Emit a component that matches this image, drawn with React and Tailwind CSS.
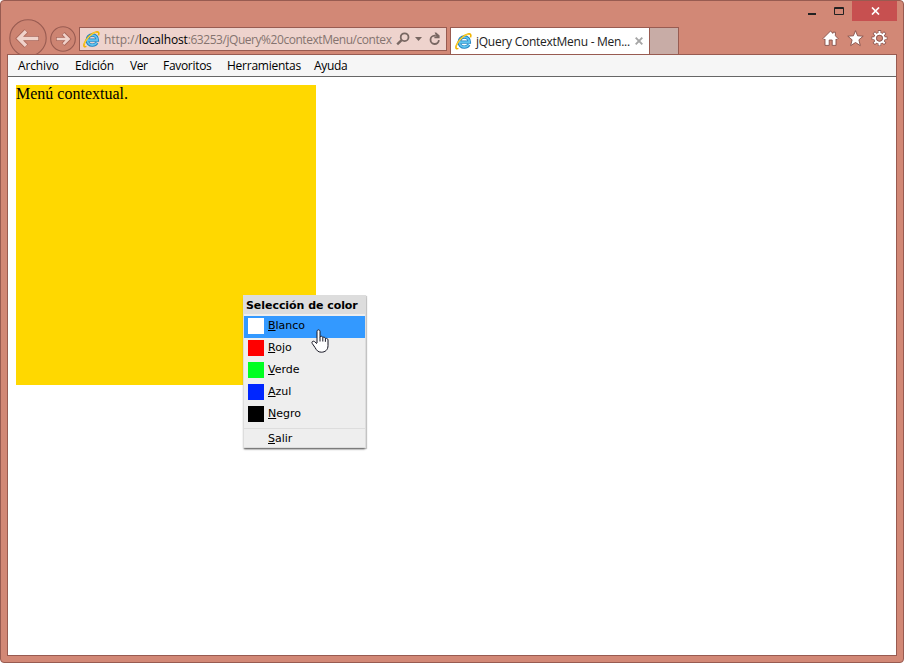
import React from "react";

function IELogo() {
  return (
    <svg width="17" height="17" viewBox="0 0 17 17" fill="none" className="shrink-0">
      <path d="M5 9.2H14.4C14.4 6.2 12.4 4 9.4 4C6.4 4 4.2 6.3 4.2 9.1C4.2 12 6.4 14.2 9.4 14.2C11.5 14.2 13 13.2 13.9 11.7" stroke="#1b7dbd" strokeWidth="3.3" />
      <path d="M5 9.2H14.3C14.3 6.3 12.4 4.1 9.4 4.1C6.4 4.1 4.3 6.3 4.3 9.1C4.3 12 6.4 14 9.4 14C11.4 14 12.9 13.1 13.7 11.8" stroke="#5fc3ef" strokeWidth="1.9" />
      <path d="M3.4 15.4C1.4 16.4.4 15.2 1.2 12.8C2.8 8 8.5 2.1 13 1C15.8.4 16.4 2 15.4 4.4" stroke="#f0b400" strokeWidth="1.6" />
      <path d="M1.5 12.6C3.3 7.9 8.6 2.6 12.9 1.2" stroke="#ffe05a" strokeWidth=".7" />
    </svg>
  );
}

function BackButton() {
  return (
    <svg width="38" height="36" viewBox="0 0 38 36" fill="none" className="shrink-0">
      <circle cx="19" cy="19" r="18.2" fill="#cd8472" stroke="#985b51" strokeWidth="1.1" />
      <path d="M17.2 12L9.8 19.5L17.2 27M10.5 19.5H30" stroke="#a96558" strokeWidth="5.2" />
      <path d="M17 12.3L9.8 19.5L17 26.7M10.5 19.5H29.3" stroke="#f0d2ca" strokeWidth="3.4" />
    </svg>
  );
}

function ForwardButton() {
  return (
    <svg width="26" height="26" viewBox="0 0 26 26" fill="none" className="shrink-0">
      <circle cx="13" cy="13" r="12.3" fill="#cd8472" stroke="#985b51" strokeWidth="1.1" />
      <path d="M13.2 7.6L18.6 13L13.2 18.4M18 13H6" stroke="#a96558" strokeWidth="4.2" />
      <path d="M13.4 7.8L18.6 13L13.4 18.2M18 13H6.7" stroke="#f0d2ca" strokeWidth="2.5" />
    </svg>
  );
}

function AddressBar() {
  return (
    <div className="ml-[3px] mt-[27px] flex h-6 w-[368px] items-center border border-[#985b51] bg-[#eed3cd]">
      <div className="ml-[3px] flex"><IELogo /></div>
      <div className="ml-1 w-[288px] whitespace-nowrap pt-px text-[12px] leading-[22px] tracking-[-0.45px] text-[#85736f]">
        <span className="tracking-[-0.06px]">http://</span><span className="tracking-[-0.15px] text-black">localhost</span>:63253/jQuery%20contextMenu/contex
      </div>
      <svg width="14" height="14" viewBox="0 0 14 14" fill="none" className="ml-[4px] shrink-0">
        <circle cx="8.6" cy="5.2" r="3.9" stroke="#786762" strokeWidth="1.8" />
        <path d="M5.6 8.2L1.2 12.4" stroke="#786762" strokeWidth="2.4" />
      </svg>
      <svg width="7" height="4" viewBox="0 0 7 4" className="ml-[5px] shrink-0">
        <path d="M0 0H7L3.5 4Z" fill="#786762" />
      </svg>
      <svg width="12" height="14" viewBox="0 0 12 14" fill="none" className="ml-[7px] shrink-0">
        <path d="M6.8 3.6H5.6A4.2 4.2 0 1 0 9.9 8.2" stroke="#786762" strokeWidth="1.8" />
        <path d="M5.6 .6H7.2L10.6 3.6V6.2H5.4V4.5H7.4Z" fill="#786762" />
      </svg>
    </div>
  );
}

function ToolIcons() {
  return (
    <div className="flex gap-2 pr-[14px]">
      <svg width="17" height="17" viewBox="0 0 17 17">
        <path d="M8.5 1L11 3.4V2.2H13.4V5.8L16 8.5L14.9 9.7L14 9V15.4H10.2V10H7.2V15.4H3V9L2.1 9.7L1 8.5Z" fill="#fff" stroke="#85504a" strokeWidth=".9" />
      </svg>
      <svg width="17" height="17" viewBox="0 0 17 17">
        <path d="M8.5 .7L10.6 5.8L16.2 6.2L11.9 9.8L13.3 15.6L8.5 12.5L3.7 15.6L5.1 9.8L.8 6.2L6.4 5.8Z" fill="#fff" stroke="#85504a" strokeWidth=".9" />
      </svg>
      <svg width="17" height="17" viewBox="0 0 17 17" fill="none" className="-ml-px mr-px">
        <path d="M8.5 .3V16.1M.6 8.2H16.4M2.8 2.5L14.2 13.9M14.2 2.5L2.8 13.9" stroke="#85504a" strokeWidth="3.3" />
        <circle cx="8.5" cy="8.2" r="4.3" stroke="#85504a" strokeWidth="3.4" />
        <path d="M8.5 1V4M8.5 12.4V15.4M1.3 8.2H4.3M12.7 8.2H15.7M3.3 3L5.5 5.2M13.7 3L11.5 5.2M3.3 13.4L5.5 11.2M13.7 13.4L11.5 11.2" stroke="#fff" strokeWidth="2" />
        <circle cx="8.5" cy="8.2" r="4.3" stroke="#fff" strokeWidth="2.1" />
        <circle cx="8.5" cy="8.2" r="3" fill="#d28876" stroke="#85504a" strokeWidth=".8" />
      </svg>
    </div>
  );
}

function WindowControls() {
  return (
    <div className="flex h-5">
      <svg width="46" height="20" viewBox="0 0 46 20" fill="none">
        <path d="M2 13H10" stroke="#222" strokeWidth="2" />
        <path d="M28.5 6.5H37.5V13.5H28.5ZM28 7.5H38" stroke="#222" />
      </svg>
      <div className="mr-[6px] flex w-[45px] items-center justify-center bg-[#c75050]">
        <svg width="9" height="8" viewBox="0 0 9 8" className="ml-px"><path d="M1 .5L8 7.5M8 .5L1 7.5" stroke="#fff" strokeWidth="1.7" /></svg>
      </div>
    </div>
  );
}

const colors = [
  ["B", "lanco", "bg-white", "bg-[#3399ff]"],
  ["R", "ojo", "bg-[#ff0000]", ""],
  ["V", "erde", "bg-[#00ff21]", ""],
  ["A", "zul", "bg-[#0026ff]", ""],
  ["N", "egro", "bg-black", ""],
];

function ContextMenu() {
  return (
    <div className="absolute left-[227px] top-[210px] h-[153px] w-[123px] border border-[#dddddd] bg-[#eeeeee] font-['DejaVu_Sans',sans-serif] text-[11px] text-black shadow-[0_2px_2px_-1px_#555,1px_1px_1px_#ccc]">
      <div className="-mx-px -mt-px h-[19px] whitespace-nowrap bg-[#dddddd] pl-[3px] pt-px font-bold leading-[19px] tracking-[-0.05px]">Selección de color</div>
      <div className="pt-[2px]">
        {colors.map(([key, rest, swatch, active]) => (
          <div key={key} className={"flex h-[22px] items-start pl-1 " + active}>
            <span className={"mt-[2px] size-4 " + swatch} />
            <span className="ml-1 leading-[19px]"><u>{key}</u>{rest}</span>
          </div>
        ))}
      </div>
      <div className="mt-[2px] border-t border-[#dddddd] pl-6 leading-[19px]"><u>S</u>alir</div>
      <svg width="18" height="24" viewBox="0 0 18 24" className="absolute left-[67px] top-[33px]">
        <path d="M6 14V2.6C6 .2 9 .2 9 2.6V8.1C9.5 6.8 11.6 7 11.8 8.6C12.6 7.7 14.2 8.2 14.4 9.6C15.5 8.9 17 9.6 17 11V16.5C17 20.8 14.3 23.2 10.3 23.2C7 23.2 5.5 21.2 4 18.5L1.2 14.4C.3 12.8 2 11.6 3.4 12.5L6 14.7" fill="#fff" stroke="#171724" />
        <path d="M9 8V12.5M11.8 8.6V12.5M14.4 9.6V12.8" stroke="#171724" />
      </svg>
    </div>
  );
}

export default function App() {
  return (
    <div className="h-[663px] w-[904px] overflow-hidden bg-white font-['Open_Sans','Noto_Sans',sans-serif]">
      <div className="flex h-full flex-col rounded-[4px] border border-[#985b51] bg-[#d28876]">
        <header className="flex h-[53px] shrink-0 overflow-hidden">
          <div className="-mt-px ml-[8px] flex h-[54px]">
            <div className="mt-[19px] h-[35px] overflow-hidden"><BackButton /></div>
            <div className="ml-[3px] mt-[26px]"><ForwardButton /></div>
            <AddressBar />
            <div className="ml-[3px] mt-[27px] flex h-[27px] w-[200px] items-center border border-b-0 border-[#985b51] bg-white pl-1 text-[12px] text-[#222]">
              <IELogo />
              <span className="ml-[4px] w-[158px] whitespace-nowrap pt-[2px] tracking-[-0.26px]">jQuery ContextMenu - Men...</span>
              <svg width="8" height="8" viewBox="0 0 8 8" className="ml-px"><path d="M.7 .7L7.3 7.3M7.3 .7L.7 7.3" stroke="#a5a5a5" strokeWidth="1.9" /></svg>
            </div>
            <div className="mt-[27px] h-[27px] w-[29px] border border-b-0 border-l-0 border-[#985b51] bg-[#c8aca6]" />
          </div>
          <div className="ml-auto flex flex-col items-end gap-[9px]">
            <WindowControls />
            <ToolIcons />
          </div>
        </header>
        <div className="mx-[6px] mb-[6px] flex min-h-0 flex-1 flex-col border border-[#985b51] bg-white">
          <nav className="flex h-[22px] shrink-0 items-center gap-4 border-b border-[#666] bg-[#f6f6f6] pl-[10px] text-[12px] leading-[20px] text-black">
            <span className="w-[41px] tracking-[-0.15px]">Archivo</span>
            <span className="w-[39px] tracking-[-0.2px]">Edición</span>
            <span className="w-[17px] tracking-[-0.5px]">Ver</span>
            <span className="w-[48px] tracking-[-0.3px]">Favoritos</span>
            <span className="w-[71px] tracking-[-0.25px]">Herramientas</span>
            <span className="tracking-[-0.35px]">Ayuda</span>
          </nav>
          <main className="p-2">
            <div className="relative size-[300px] bg-[#ffd800] font-['Liberation_Serif',serif] text-[16px] leading-[18px] text-black">
              Menú contextual.
              <ContextMenu />
            </div>
          </main>
        </div>
      </div>
    </div>
  );
}
